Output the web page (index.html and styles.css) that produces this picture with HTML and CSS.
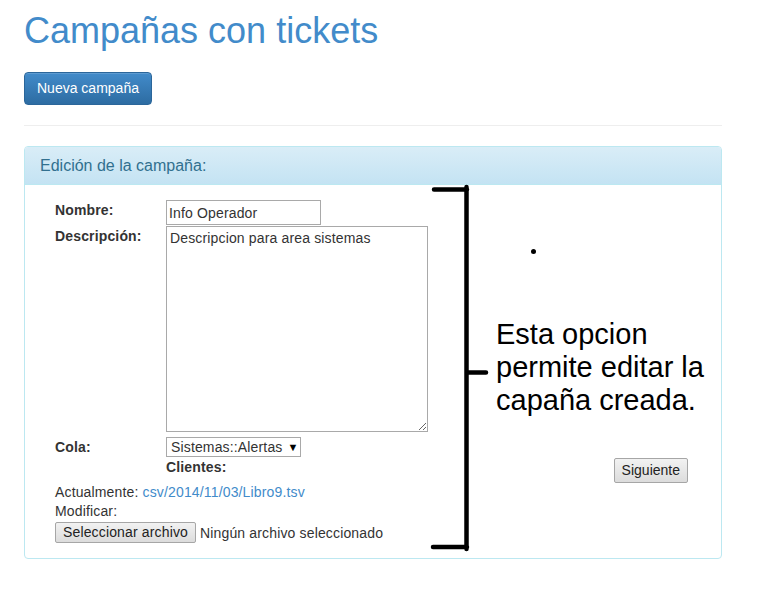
FILE: index.html
```html
<!DOCTYPE html>
<html lang="es">
<head>
    <meta charset="UTF-8">
    <meta name="viewport" content="width=device-width, initial-scale=1.0">
    <title>Campañas con tickets</title>
    <link rel="stylesheet" href="styles.css">
</head>
<body>

    <div class="page">

        <!-- Header -->
        <h1 class="title">Campañas con tickets</h1>
        <button class="btn-primary">Nueva campaña</button>
        <hr class="divider">

        <!-- Panel -->
        <div class="panel">
            <div class="panel-heading">Edición de la campaña:</div>
            <div class="panel-body">
                <form class="edit-form">
                    <div class="field">
                        <label>Nombre:</label>
                        <input class="text-input" type="text" value="Info Operador">
                    </div>
                    <div class="field field-desc">
                        <label>Descripción:</label>
                        <textarea class="text-area">Descripcion para area sistemas</textarea>
                    </div>
                    <div class="field field-cola">
                        <label>Cola:</label>
                        <span class="select-box">Sistemas::Alertas <span class="arrow">&#9660;</span></span>
                    </div>
                    <div class="clientes">Clientes:</div>
                    <p class="file-line">Actualmente: <a href="#">csv/2014/11/03/Libro9.tsv</a></p>
                    <p class="file-line">Modificar:</p>
                    <div class="file-row">
                        <span class="btn-plain">Seleccionar archivo</span>
                        <span class="file-name">Ningún archivo seleccionado</span>
                    </div>
                </form>
                <div class="actions">
                    <button class="btn-plain btn-next" type="button">Siguiente</button>
                </div>
            </div>
        </div>

        <!-- Annotation -->
        <svg class="bracket" width="60" height="372" viewBox="0 0 60 372">
            <path d="M4 6.5 H37 M36.5 4 V366 M3 364 H37 M36.5 189.5 H56" fill="none" stroke="#000" stroke-width="4.5" stroke-linecap="round"/>
        </svg>
        <span class="dot"></span>
        <p class="note">Esta opcion<br>permite editar la<br>capaña creada.</p>

    </div>

</body>
</html>
```

FILE: styles.css
```css
/* Global Styles */
* {
    margin: 0;
    padding: 0;
    box-sizing: border-box;
    font-family: "Liberation Sans", Arial, sans-serif;
}

body {
    background-color: #fff;
    color: #333;
    font-size: 14px;
}

.page {
    position: relative;
    width: 698px;
    margin-left: 24px;
    padding-top: 11px;
}

/* Header */
.title {
    font-size: 36px;
    font-weight: normal;
    line-height: 1.1;
    color: #428bca;
    margin-bottom: 21px;
}

.btn-primary {
    display: inline-block;
    font-size: 14px;
    line-height: 19px;
    padding: 6px 12px;
    color: white;
    background: linear-gradient(to bottom, #428bca, #2d6ca2);
    border: 1px solid #2b669a;
    border-radius: 4px;
    box-shadow: inset 0 1px 0 rgba(255, 255, 255, 0.15);
}

.divider {
    border: 0;
    border-top: 1px solid #eee;
    margin: 20px 0;
}

/* Panel */
.panel {
    border: 1px solid #bce8f1;
    border-radius: 4px;
    overflow: hidden;
}

.panel-heading {
    padding: 10px 15px;
    font-size: 16px;
    line-height: 1.1;
    color: #31708f;
    background: linear-gradient(to bottom, #d9edf7, #c4e3f3);
    border-bottom: 1px solid #bce8f1;
}

.panel-body {
    display: flex;
    justify-content: space-between;
    padding: 15px 33px 15px 30px;
}

/* Form */
.edit-form {
    letter-spacing: 0.15px;
}

.field {
    display: flex;
    align-items: flex-start;
}

.field label {
    width: 111px;
    flex: none;
    font-weight: bold;
    line-height: 21px;
}

.field-desc {
    margin-top: 1px;
}

.field-cola {
    margin-top: 5px;
}

.text-input {
    width: 155px;
    height: 25px;
    padding: 1px 2px;
    font-size: 14px;
    letter-spacing: 0.15px;
    color: #333;
    border: 1px solid #a9a9a9;
}

.text-area {
    width: 262px;
    height: 206px;
    padding: 3px 3px;
    font-size: 14px;
    line-height: 17px;
    letter-spacing: 0.15px;
    color: #333;
    border: 1px solid #a9a9a9;
    resize: both;
}

.select-box {
    display: inline-flex;
    align-items: center;
    width: 135px;
    height: 20px;
    padding: 0 4px;
    line-height: 18px;
    border: 1px solid #a9a9a9;
    background: white;
}

.select-box .arrow {
    font-size: 11px;
    margin-left: 5px;
    color: #000;
}

.clientes {
    margin: 1px 0 0 111px;
    font-weight: bold;
    line-height: 16px;
}

.file-line {
    line-height: 19px;
}

.clientes + .file-line {
    margin-top: 8px;
}

.file-line a {
    color: #428bca;
    text-decoration: none;
}

.file-row {
    display: flex;
    align-items: center;
    gap: 4px;
    margin-top: 1px;
}

.btn-plain {
    display: inline-block;
    font-size: 14px;
    line-height: 17px;
    padding: 1px 7px;
    color: #222;
    background: linear-gradient(to bottom, #f2f2f2, #dcdcdc);
    border: 1px solid #a6a6a6;
    border-radius: 2px;
}

.actions {
    padding-top: 258px;
}

.btn-next {
    padding: 3px 7px;
}

/* Annotation */
.bracket {
    position: absolute;
    left: 406px;
    top: 183px;
}

.dot {
    position: absolute;
    left: 507px;
    top: 249px;
    width: 5px;
    height: 5px;
    border-radius: 50%;
    background: #000;
}

.note {
    position: absolute;
    left: 472px;
    top: 318px;
    font-size: 29px;
    line-height: 33px;
    color: #000;
    white-space: nowrap;
}
```
